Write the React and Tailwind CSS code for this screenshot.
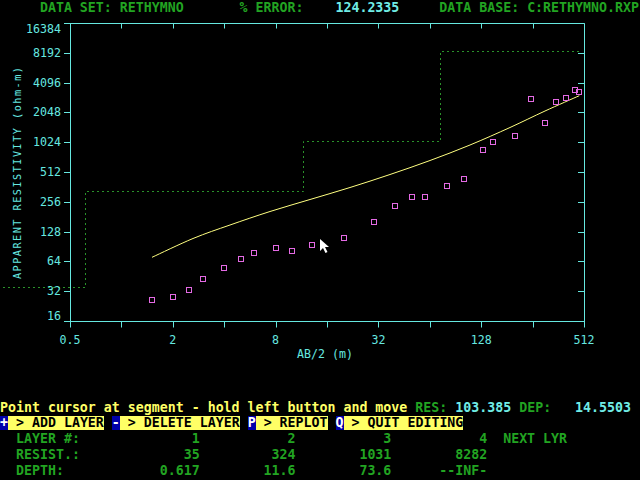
import React from "react";

const GREEN = "text-[#22a422]";
const CYAN = "text-[#70ece6]";

// log-log scale of the sounding plot, in screen pixels
const X = (v) => 70 + Math.log2(v / 0.5) * 51.4;
const Y = (r) => 321 - Math.log2(r / 16) * 29.8;
const px = (n) => Math.round(n) + 0.5;

const yLabels = [16, 32, 64, 128, 256, 512, 1024, 2048, 4096, 8192, 16384];
const xLabels = [0.5, 2, 8, 32, 128, 512];

const observed = [
  [152, 300], [173, 297], [189, 290], [203, 279], [224, 268], [241, 259],
  [254, 253], [276, 248], [292, 251], [312, 245], [344, 238], [374, 222],
  [395, 206], [412, 197], [425, 197], [447, 186], [464, 179], [483, 150],
  [493, 142], [515, 136], [531, 99], [545, 123], [556, 102], [566, 98],
  [575, 90], [579, 92],
];

const calculated = [
  [152, 257.3], [193, 238.5], [230, 225], [270, 211.5], [310, 199.5],
  [350, 187.5], [390, 174.5], [430, 160.5], [470, 145], [510, 127.5],
  [545, 111], [579.3, 95.7],
];

// catmull-rom through the sampled points
const smooth = (pts) => {
  let d = `M${pts[0][0]} ${pts[0][1]}`;
  for (let i = 0; i < pts.length - 1; i++) {
    const p0 = pts[i - 1] || pts[i];
    const p1 = pts[i];
    const p2 = pts[i + 1];
    const p3 = pts[i + 2] || p2;
    const c1 = [p1[0] + (p2[0] - p0[0]) / 6, p1[1] + (p2[1] - p0[1]) / 6];
    const c2 = [p2[0] - (p3[0] - p1[0]) / 6, p2[1] - (p3[1] - p1[1]) / 6];
    d += ` C${c1[0]} ${c1[1]} ${c2[0]} ${c2[1]} ${p2[0]} ${p2[1]}`;
  }
  return d;
};

const Chart = () => {
  const cyan = "#66e8e0";
  return (
    <svg width="640" height="384" viewBox="0 16 640 384" className="block font-normal">
      {/* layer model */}
      <path
        d="M3 287.5 H85.5 V191.5 H303.5 V141.5 H440.5 V51.5 H579"
        fill="none"
        stroke="#2a922a"
        strokeWidth="1"
        strokeDasharray="2 3"
      />

      {/* frame */}
      <path d="M64 23.5 H584.5 V321.5 H70.5 V23" fill="none" stroke={cyan} strokeWidth="1" />

      {yLabels.map((r) => {
        const y = px(Y(r));
        return (
          <g key={r}>
            <line x1="64" y1={y} x2="70.5" y2={y} stroke={cyan} />
            <line x1="578" y1={y} x2="584.5" y2={y} stroke={cyan} />
          </g>
        );
      })}
      {Array.from({ length: 11 }, (_, k) => {
        const x = px(70 + k * 51.4);
        return (
          <g key={k}>
            <line x1={x} y1="321" x2={x} y2="327.5" stroke={cyan} />
            {k > 0 && k < 10 && <line x1={x} y1="23" x2={x} y2="28.5" stroke={cyan} />}
          </g>
        );
      })}

      <g fill={cyan} fontFamily="'DejaVu Sans Mono', monospace" fontSize="11.6" fontWeight="400">
        {yLabels.map((r) => {
          let y = Y(r);
          if (r === 16) y = 316;
          if (r === 16384) y = 29;
          return (
            <text key={r} x="61" y={y + 4} textAnchor="end">
              {r}
            </text>
          );
        })}
        {xLabels.map((v) => (
          <text key={v} x={X(v)} y="343.5" textAnchor="middle">
            {v}
          </text>
        ))}
        <text x="325" y="358" textAnchor="middle">
          AB/2 (m)
        </text>
        <text
          x="0"
          y="0"
          fontSize="10.2"
          textAnchor="middle"
          textLength="212"
          lengthAdjust="spacing"
          transform="translate(20.5 173) rotate(-90)"
        >
          APPARENT RESISTIVITY (ohm-m)
        </text>
      </g>

      {/* calculated curve */}
      <path d={smooth(calculated)} fill="none" stroke="#ffff80" strokeWidth="1" />

      {/* field data */}
      {observed.map(([x, y], i) => (
        <rect key={i} x={x - 2.5} y={y - 2.5} width="5" height="5" fill="none" stroke="#e46ae4" strokeWidth="1" />
      ))}

      {/* mouse pointer */}
      <path d="M320 239 L320 251 L323 248 L325.5 253 L327.5 252 L325 247 L329 247 Z" fill="#ffffff" />
    </svg>
  );
};

const Key = ({ k }) => (
  <span className="inline-block h-[14px] leading-[14px] align-top bg-[#0000aa] text-white">{k}</span>
);

const Bar = ({ children }) => (
  <span className="inline-block h-[14px] leading-[14px] align-top bg-[#ffff66] text-black">{children}</span>
);

export default function App() {
  return (
    <div
      className="w-[640px] h-[480px] bg-black overflow-hidden whitespace-pre font-bold text-[13.288px]"
      style={{ fontFamily: "'DejaVu Sans Mono', 'Liberation Mono', monospace" }}
    >
      <div className={`h-4 leading-4 ${GREEN}`}>
        {"     DATA SET: RETHYMNO       % ERROR:    "}
        <span className={CYAN}>124.2335</span>
        {"     DATA BASE: C:RETHYMNO.RXP"}
      </div>

      <Chart />

      <div className="h-4 leading-[15px] text-[#ffff66]">
        {"Point cursor at segment - hold left button and move "}
        <span className={GREEN}>RES:</span> <span className={CYAN}>103.385</span>{" "}
        <span className={GREEN}>DEP:</span>
        {"   "}
        <span className={CYAN}>14.5503</span>
      </div>
      <div className="h-4">
        <Key k="+" />
        <Bar>{" > ADD LAYER"}</Bar>
        {" "}
        <Key k="-" />
        <Bar>{" > DELETE LAYER"}</Bar>
        {" "}
        <Key k="P" />
        <Bar>{" > REPLOT"}</Bar>
        {" "}
        <Key k="Q" />
        <Bar>{" > QUIT EDITING"}</Bar>
      </div>
      <div className={`h-4 leading-[14px] ${GREEN}`}>
        {"  LAYER #:              1           2           3           4  NEXT LYR"}
      </div>
      <div className={`h-4 leading-[14px] ${GREEN}`}>
        {"  RESIST.:             35         324        1031        8282"}
      </div>
      <div className={`h-4 leading-[14px] ${GREEN}`}>
        {"  DEPTH:            0.617        11.6        73.6      --INF-"}
      </div>
    </div>
  );
}
